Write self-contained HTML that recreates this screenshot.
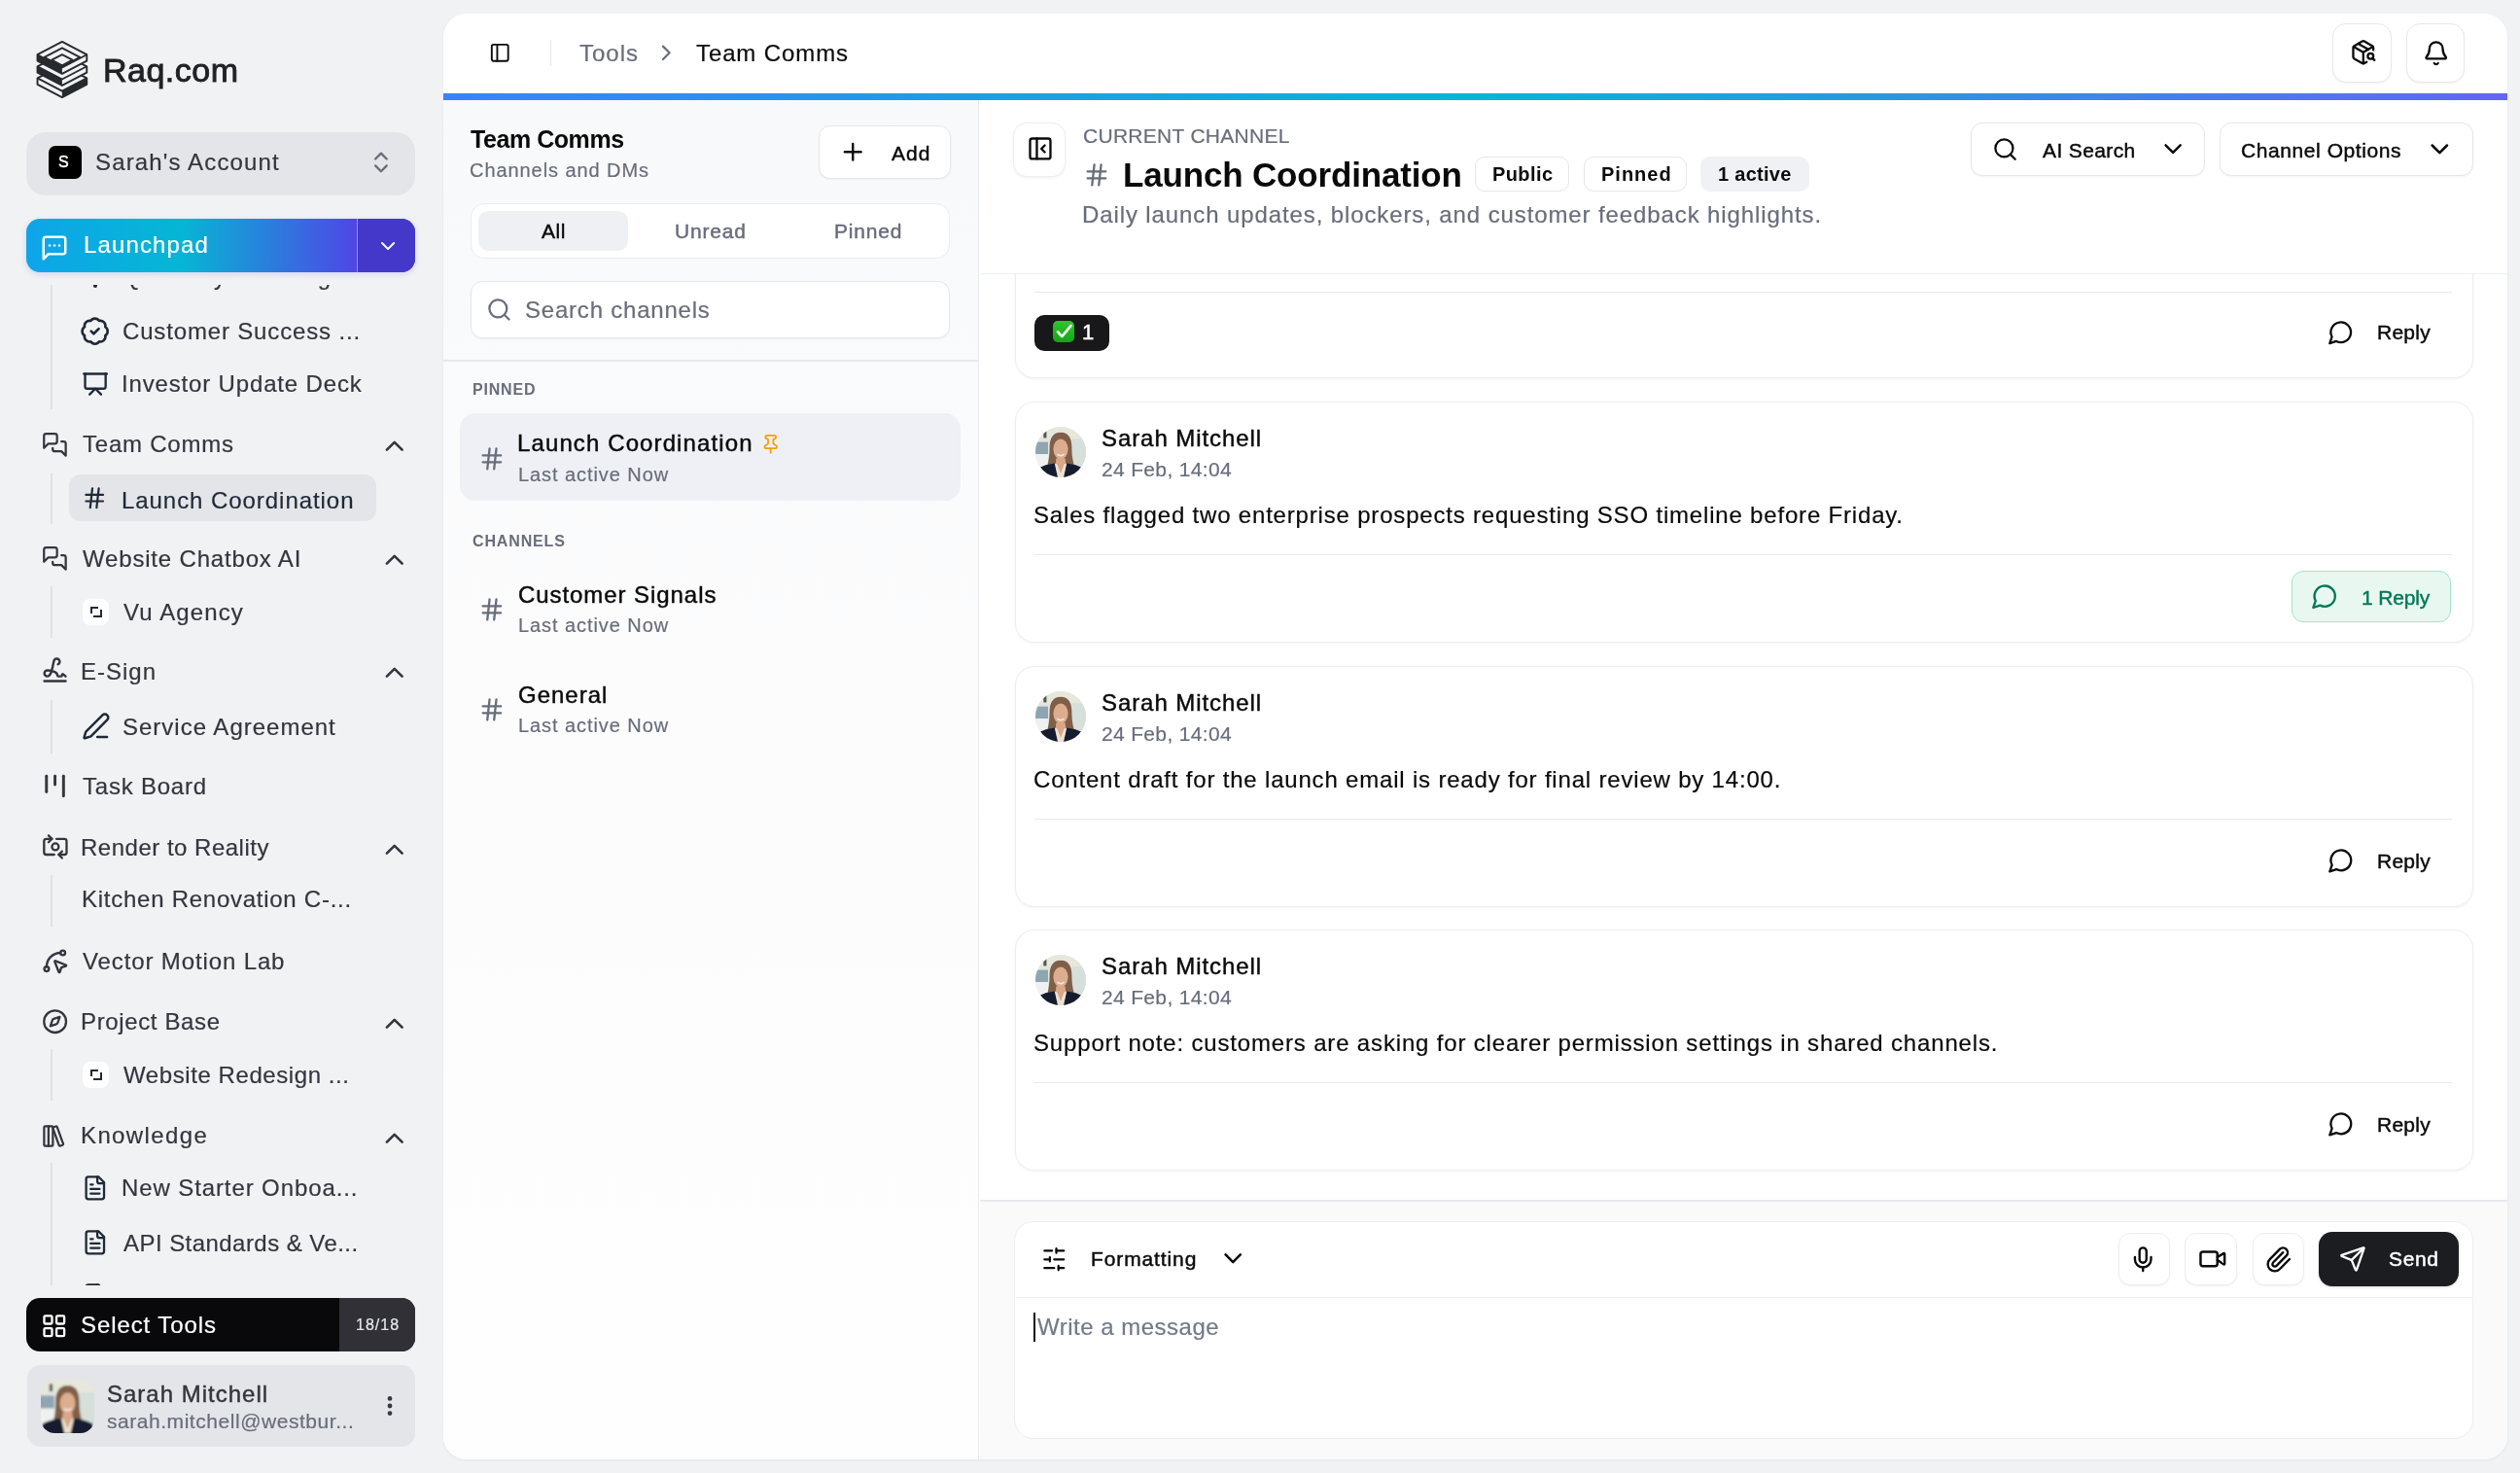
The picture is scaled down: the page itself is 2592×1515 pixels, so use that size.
<!DOCTYPE html>
<html><head><meta charset="utf-8"><title>Team Comms</title>
<style>
html,body{margin:0;padding:0;}
body{width:2592px;height:1515px;position:relative;overflow:hidden;background:#f1f2f4;font-family:"Liberation Sans",sans-serif;}
.t{position:absolute;white-space:nowrap;line-height:1;will-change:transform;}
.b{position:absolute;box-sizing:border-box;}
.i{position:absolute;overflow:visible;}

</style></head><body>
<svg class="i" style="left:31.3px;top:37.3px;width:67.3px;height:67.3px" viewBox="0 0 1473 1473"><path d="M165 950 L720 660 L1275 950 L1275 1090 L720 1380 L165 1090 Z" fill="#f1f2f4"/><path d="M720 1240 L1275 950 L1275 1090 L720 1380 Z" fill="#272a2e"/><path d="M165 950 L720 660 L1275 950 L1275 1090 L720 1380 L165 1090 Z" fill="none" stroke="#272a2e" stroke-width="42" stroke-linejoin="round"/><path d="M165 950 L720 1240 L1275 950" fill="none" stroke="#272a2e" stroke-width="40" stroke-linejoin="round"/><path d="M165 685 L720 395 L1275 685 L1275 825 L720 1115 L165 825 Z" fill="#f1f2f4"/><path d="M165 685 L720 975 L720 1115 L165 825 Z" fill="#272a2e"/><path d="M165 685 L720 395 L1275 685 L1275 825 L720 1115 L165 825 Z" fill="none" stroke="#272a2e" stroke-width="42" stroke-linejoin="round"/><path d="M165 685 L720 975 L1275 685" fill="none" stroke="#272a2e" stroke-width="40" stroke-linejoin="round"/><path d="M165 420 L720 130 L1275 420 L1275 560 L720 850 L165 560 Z" fill="#f1f2f4"/><path d="M165 420 L720 710 L720 850 L165 560 Z" fill="#272a2e"/><path d="M320.40000000000003 480 L720 271.20000000000005 L1119.6 480 L720 688.8 Z" fill="none" stroke="#272a2e" stroke-width="40" stroke-linejoin="round"/><path d="M486.9 540 L720 418.2 L953.1 540 L720 661.8 Z" fill="none" stroke="#272a2e" stroke-width="40" stroke-linejoin="round"/><path d="M165 420 L720 130 L1275 420 L1275 560 L720 850 L165 560 Z" fill="none" stroke="#272a2e" stroke-width="42" stroke-linejoin="round"/><path d="M165 420 L720 710 L1275 420" fill="none" stroke="#272a2e" stroke-width="40" stroke-linejoin="round"/></svg>
<div class="t" id="t1" style="left:106.00px;top:54.71px;font-size:34px;letter-spacing:0.500px;color:#1f2125;font-weight:400;-webkit-text-stroke:0.9px #1f2125;">Raq.com</div>
<div class="b" style="left:27px;top:136px;width:400px;height:65px;background:#e4e5e9;border-radius:20px;"></div>
<div class="b" style="left:50px;top:150px;width:34px;height:34px;background:#000;border-radius:7px;"></div>
<div class="t" id="t2" style="left:60.00px;top:158.95px;font-size:16px;letter-spacing:0.000px;color:#fff;font-weight:400;-webkit-text-stroke:0.45px #fff;">S</div>
<div class="t" id="t3" style="left:98.00px;top:155.48px;font-size:24px;letter-spacing:1.143px;color:#33363e;font-weight:400;-webkit-text-stroke:0.2px #33363e;">Sarah&#x27;s Account</div>
<svg class="i" style="left:378.03px;top:153.22px;width:27.87px;height:27.87px;" viewBox="0 0 24 24" fill="none" stroke="#686d7a" stroke-width="2" stroke-linecap="round" stroke-linejoin="round"><path d="m7 15 5 5 5-5"/><path d="m7 9 5-5 5 5"/></svg>
<div class="b" style="left:27px;top:225px;width:400px;height:55px;border-radius:14px;background:linear-gradient(90deg,#0ea5e9 0%,#06b6d4 40%,#4f46e5 85%,#4f46e5 100%);box-shadow:0 2px 6px rgba(79,70,229,0.18);overflow:hidden"><div style="position:absolute;left:340px;top:0;width:60px;height:55px;background:#4338ca;border-left:1.5px solid rgba(255,255,255,0.45)"></div></div>
<svg class="i" style="left:40.50px;top:239.50px;width:30.00px;height:30.00px;" viewBox="0 0 24 24" fill="none" stroke="#fff" stroke-width="2" stroke-linecap="round" stroke-linejoin="round"><path d="M21 15a2 2 0 0 1-2 2H7l-4 4V5a2 2 0 0 1 2-2h14a2 2 0 0 1 2 2z"/><path d="M8 10h.01"/><path d="M12 10h.01"/><path d="M16 10h.01"/></svg>
<div class="t" id="t4" style="left:85.50px;top:240.48px;font-size:24px;letter-spacing:1.125px;color:#fff;font-weight:400;-webkit-text-stroke:0.2px #fff;">Launchpad</div>
<svg class="i" style="left:386.97px;top:241.45px;width:24.15px;height:24.15px;" viewBox="0 0 24 24" fill="none" stroke="#fff" stroke-width="2" stroke-linecap="round" stroke-linejoin="round"><path d="m6 9 6 6 6-6"/></svg>
<div style="position:absolute;left:0;top:293px;width:440px;height:1029px;overflow:hidden">
<div style="position:absolute;left:0;top:-293px;width:440px;height:1515px">
<div class="b" style="left:52px;top:270px;width:2px;height:151px;background:#dfe1e5;"></div>
<div class="b" style="left:52px;top:487px;width:2px;height:52px;background:#dfe1e5;"></div>
<div class="b" style="left:52px;top:603px;width:2px;height:53px;background:#dfe1e5;"></div>
<div class="b" style="left:52px;top:720px;width:2px;height:55px;background:#dfe1e5;"></div>
<div class="b" style="left:52px;top:900px;width:2px;height:53px;background:#dfe1e5;"></div>
<div class="b" style="left:52px;top:1079px;width:2px;height:53px;background:#dfe1e5;"></div>
<div class="b" style="left:52px;top:1196px;width:2px;height:134px;background:#dfe1e5;"></div>
<div class="t" id="t5" style="left:126.00px;top:273.28px;font-size:24px;letter-spacing:0.900px;color:#33363e;font-weight:400;-webkit-text-stroke:0.2px #33363e;">Quarterly Planning</div>
<div class="b" style="left:96px;top:292px;width:4px;height:3.5px;background:#1f2937;border-radius:2px;"></div>
<svg class="i" style="left:82.24px;top:324.74px;width:31.33px;height:31.33px;" viewBox="0 0 24 24" fill="none" stroke="#1f2937" stroke-width="2" stroke-linecap="round" stroke-linejoin="round"><path d="M3.85 8.62a4 4 0 0 1 4.78-4.77 4 4 0 0 1 6.74 0 4 4 0 0 1 4.78 4.78 4 4 0 0 1 0 6.74 4 4 0 0 1-4.77 4.78 4 4 0 0 1-6.75 0 4 4 0 0 1-4.78-4.77 4 4 0 0 1 0-6.76Z"/><path d="m9 12 2 2 4-4"/></svg>
<div class="t" id="t6" style="left:126.00px;top:329.08px;font-size:24px;letter-spacing:0.842px;color:#33363e;font-weight:400;-webkit-text-stroke:0.2px #33363e;">Customer Success ...</div>
<svg class="i" style="left:84.33px;top:381.25px;width:28.19px;height:28.19px;" viewBox="0 0 24 24" fill="none" stroke="#1f2937" stroke-width="2" stroke-linecap="round" stroke-linejoin="round"><path d="M2 3h20"/><path d="M21 3v11a2 2 0 0 1-2 2H5a2 2 0 0 1-2-2V3"/><path d="m7 21 5-5 5 5"/></svg>
<div class="t" id="t7" style="left:125.00px;top:383.18px;font-size:24px;letter-spacing:0.842px;color:#33363e;font-weight:400;-webkit-text-stroke:0.2px #33363e;">Investor Update Deck</div>
<svg class="i" style="left:42.58px;top:443.58px;width:26.89px;height:26.89px;" viewBox="0 0 24 24" fill="none" stroke="#33363e" stroke-width="2" stroke-linecap="round" stroke-linejoin="round"><path d="M14 9a2 2 0 0 1-2 2H6l-4 4V4a2 2 0 0 1 2-2h8a2 2 0 0 1 2 2z"/><path d="M18 9h2a2 2 0 0 1 2 2v11l-4-4h-6a2 2 0 0 1-2-2v-1"/></svg>
<div class="t" id="t8" style="left:84.60px;top:445.18px;font-size:24px;letter-spacing:0.778px;color:#33363e;font-weight:400;-webkit-text-stroke:0.2px #33363e;">Team Comms</div>
<svg class="i" style="left:389.94px;top:442.50px;width:31.50px;height:31.50px;" viewBox="0 0 24 24" fill="none" stroke="#33363e" stroke-width="2" stroke-linecap="round" stroke-linejoin="round"><path d="m18 15-6-6-6 6"/></svg>
<div class="b" style="left:71px;top:488px;width:316px;height:48px;background:#e4e5e9;border-radius:12px;"></div>
<svg class="i" style="left:84.40px;top:498.80px;width:26.40px;height:26.40px;" viewBox="0 0 24 24" fill="none" stroke="#1f2937" stroke-width="2" stroke-linecap="round" stroke-linejoin="round"><line x1="4" x2="20" y1="9" y2="9"/><line x1="4" x2="20" y1="15" y2="15"/><line x1="10" x2="8" y1="3" y2="21"/><line x1="16" x2="14" y1="3" y2="21"/></svg>
<div class="t" id="t9" style="left:125.00px;top:502.68px;font-size:24px;letter-spacing:0.944px;color:#1f2937;font-weight:400;-webkit-text-stroke:0.2px #1f2937;">Launch Coordination</div>
<svg class="i" style="left:42.58px;top:560.88px;width:26.89px;height:26.89px;" viewBox="0 0 24 24" fill="none" stroke="#33363e" stroke-width="2" stroke-linecap="round" stroke-linejoin="round"><path d="M14 9a2 2 0 0 1-2 2H6l-4 4V4a2 2 0 0 1 2-2h8a2 2 0 0 1 2 2z"/><path d="M18 9h2a2 2 0 0 1 2 2v11l-4-4h-6a2 2 0 0 1-2-2v-1"/></svg>
<div class="t" id="t10" style="left:84.60px;top:562.68px;font-size:24px;letter-spacing:0.824px;color:#33363e;font-weight:400;-webkit-text-stroke:0.2px #33363e;">Website Chatbox AI</div>
<svg class="i" style="left:389.94px;top:560.00px;width:31.50px;height:31.50px;" viewBox="0 0 24 24" fill="none" stroke="#33363e" stroke-width="2" stroke-linecap="round" stroke-linejoin="round"><path d="m18 15-6-6-6 6"/></svg>
<div class="b" style="left:85px;top:616px;width:27.400000000000006px;height:26.600000000000023px;background:#fff;border-radius:8px;"></div>
<div class="b" style="left:93px;top:624px;width:8px;height:7px;border:2.2px solid #1f2937;border-right:none;border-bottom:none"></div><div class="b" style="left:96px;top:627px;width:9px;height:8px;border:2.2px solid #1f2937;border-left:none;border-top:none"></div>
<div class="t" id="t11" style="left:127.00px;top:617.68px;font-size:24px;letter-spacing:1.125px;color:#33363e;font-weight:400;-webkit-text-stroke:0.2px #33363e;">Vu Agency</div>
<svg class="i" style="left:41.57px;top:674.96px;width:29.17px;height:29.17px;" viewBox="0 0 24 24" fill="none" stroke="#33363e" stroke-width="2" stroke-linecap="round" stroke-linejoin="round"><path d="m21 17-2.156-1.868A.5.5 0 0 0 18 15.5v.5a1 1 0 0 1-1 1h-2a1 1 0 0 1-1-1c0-2.545-3.991-3.97-8.5-4a1 1 0 0 0 0 5c4.153 0 4.745-11.295 5.708-13.5a2.5 2.5 0 1 1 3.31 3.284"/><path d="M3 21h18"/></svg>
<div class="t" id="t12" style="left:82.60px;top:678.68px;font-size:24px;letter-spacing:1.000px;color:#33363e;font-weight:400;-webkit-text-stroke:0.2px #33363e;">E-Sign</div>
<svg class="i" style="left:389.94px;top:676.00px;width:31.50px;height:31.50px;" viewBox="0 0 24 24" fill="none" stroke="#33363e" stroke-width="2" stroke-linecap="round" stroke-linejoin="round"><path d="m18 15-6-6-6 6"/></svg>
<svg class="i" style="left:84.26px;top:732.14px;width:29.79px;height:29.79px;" viewBox="0 0 24 24" fill="none" stroke="#1f2937" stroke-width="2" stroke-linecap="round" stroke-linejoin="round"><path d="M13 21h8"/><path d="M21.174 6.812a1 1 0 0 0-3.986-3.987L3.842 16.174a2 2 0 0 0-.5.83l-1.321 4.352a.5.5 0 0 0 .623.622l4.353-1.32a2 2 0 0 0 .83-.497z"/></svg>
<div class="t" id="t13" style="left:126.00px;top:736.18px;font-size:24px;letter-spacing:1.000px;color:#33363e;font-weight:400;-webkit-text-stroke:0.2px #33363e;">Service Agreement</div>
<svg class="i" style="left:38.68px;top:791.14px;width:35.14px;height:35.14px;" viewBox="0 0 24 24" fill="none" stroke="#33363e" stroke-width="2" stroke-linecap="round" stroke-linejoin="round"><path d="M6 5v11"/><path d="M12 5v6"/><path d="M18 5v14"/></svg>
<div class="t" id="t14" style="left:84.60px;top:796.68px;font-size:24px;letter-spacing:0.778px;color:#33363e;font-weight:400;-webkit-text-stroke:0.2px #33363e;">Task Board</div>
<svg class="i" style="left:42.54px;top:856.84px;width:27.82px;height:27.82px;" viewBox="0 0 24 24" fill="none" stroke="#33363e" stroke-width="2" stroke-linecap="round" stroke-linejoin="round"><path d="M11 19H4a2 2 0 0 1-2-2V7a2 2 0 0 1 2-2h5"/><path d="M13 5h7a2 2 0 0 1 2 2v10a2 2 0 0 1-2 2h-5"/><circle cx="12" cy="12" r="3"/><path d="m18 22-3-3 3-3"/><path d="m6 2 3 3-3 3"/></svg>
<div class="t" id="t15" style="left:82.60px;top:859.68px;font-size:24px;letter-spacing:0.500px;color:#33363e;font-weight:400;-webkit-text-stroke:0.2px #33363e;">Render to Reality</div>
<svg class="i" style="left:389.94px;top:857.50px;width:31.50px;height:31.50px;" viewBox="0 0 24 24" fill="none" stroke="#33363e" stroke-width="2" stroke-linecap="round" stroke-linejoin="round"><path d="m18 15-6-6-6 6"/></svg>
<div class="t" id="t16" style="left:83.50px;top:913.28px;font-size:24px;letter-spacing:0.739px;color:#33363e;font-weight:400;-webkit-text-stroke:0.2px #33363e;">Kitchen Renovation C-...</div>
<svg class="i" style="left:41.62px;top:973.62px;width:28.57px;height:28.57px;" viewBox="0 0 24 24" fill="none" stroke="#33363e" stroke-width="2" stroke-linecap="round" stroke-linejoin="round"><path d="M12.034 12.681a.498.498 0 0 1 .647-.647l9 3.5a.5.5 0 0 1-.033.943l-3.444 1.068a1 1 0 0 0-.66.66l-1.067 3.443a.5.5 0 0 1-.943.033z"/><path d="M5 17A12 12 0 0 1 17 5"/><circle cx="19" cy="5" r="2"/><circle cx="5" cy="19" r="2"/></svg>
<div class="t" id="t17" style="left:84.60px;top:976.68px;font-size:24px;letter-spacing:0.875px;color:#33363e;font-weight:400;-webkit-text-stroke:0.2px #33363e;">Vector Motion Lab</div>
<svg class="i" style="left:42.56px;top:1036.86px;width:27.27px;height:27.27px;" viewBox="0 0 24 24" fill="none" stroke="#33363e" stroke-width="2" stroke-linecap="round" stroke-linejoin="round"><path d="m16.24 7.76-1.804 5.411a2 2 0 0 1-1.265 1.265L7.76 16.24l1.804-5.411a2 2 0 0 1 1.265-1.265z"/><circle cx="12" cy="12" r="10"/></svg>
<div class="t" id="t18" style="left:82.60px;top:1038.68px;font-size:24px;letter-spacing:0.636px;color:#33363e;font-weight:400;-webkit-text-stroke:0.2px #33363e;">Project Base</div>
<svg class="i" style="left:389.94px;top:1036.50px;width:31.50px;height:31.50px;" viewBox="0 0 24 24" fill="none" stroke="#33363e" stroke-width="2" stroke-linecap="round" stroke-linejoin="round"><path d="m18 15-6-6-6 6"/></svg>
<div class="b" style="left:85px;top:1092px;width:27.400000000000006px;height:26.59999999999991px;background:#fff;border-radius:8px;"></div>
<div class="b" style="left:93px;top:1100px;width:8px;height:7px;border:2.2px solid #1f2937;border-right:none;border-bottom:none"></div><div class="b" style="left:96px;top:1103px;width:9px;height:8px;border:2.2px solid #1f2937;border-left:none;border-top:none"></div>
<div class="t" id="t19" style="left:127.00px;top:1093.68px;font-size:24px;letter-spacing:0.579px;color:#33363e;font-weight:400;-webkit-text-stroke:0.2px #33363e;">Website Redesign ...</div>
<svg class="i" style="left:42.25px;top:1154.75px;width:27.00px;height:27.00px;" viewBox="0 0 24 24" fill="none" stroke="#33363e" stroke-width="2" stroke-linecap="round" stroke-linejoin="round"><rect width="8" height="18" x="3" y="3" rx="1"/><path d="M7 3v18"/><path d="M20.4 18.9c.2.5-.1 1.1-.6 1.3l-1.9.7c-.5.2-1.1-.1-1.3-.6L11.1 5.1c-.2-.5.1-1.1.6-1.3l1.9-.7c.5-.2 1.1.1 1.3.6Z"/></svg>
<div class="t" id="t20" style="left:82.60px;top:1155.98px;font-size:24px;letter-spacing:1.375px;color:#33363e;font-weight:400;-webkit-text-stroke:0.2px #33363e;">Knowledge</div>
<svg class="i" style="left:389.94px;top:1154.50px;width:31.50px;height:31.50px;" viewBox="0 0 24 24" fill="none" stroke="#33363e" stroke-width="2" stroke-linecap="round" stroke-linejoin="round"><path d="m18 15-6-6-6 6"/></svg>
<svg class="i" style="left:84.05px;top:1207.85px;width:27.64px;height:27.64px;" viewBox="0 0 24 24" fill="none" stroke="#1f2937" stroke-width="2" stroke-linecap="round" stroke-linejoin="round"><path d="M15 2H6a2 2 0 0 0-2 2v16a2 2 0 0 0 2 2h12a2 2 0 0 0 2-2V7Z"/><path d="M14 2v4a2 2 0 0 0 2 2h4"/><path d="M10 9H8"/><path d="M16 13H8"/><path d="M16 17H8"/></svg>
<div class="t" id="t21" style="left:125.00px;top:1210.18px;font-size:24px;letter-spacing:0.895px;color:#33363e;font-weight:400;-webkit-text-stroke:0.2px #33363e;">New Starter Onboa...</div>
<svg class="i" style="left:84.05px;top:1263.85px;width:27.64px;height:27.64px;" viewBox="0 0 24 24" fill="none" stroke="#1f2937" stroke-width="2" stroke-linecap="round" stroke-linejoin="round"><path d="M15 2H6a2 2 0 0 0-2 2v16a2 2 0 0 0 2 2h12a2 2 0 0 0 2-2V7Z"/><path d="M14 2v4a2 2 0 0 0 2 2h4"/><path d="M10 9H8"/><path d="M16 13H8"/><path d="M16 17H8"/></svg>
<div class="t" id="t22" style="left:127.00px;top:1266.68px;font-size:24px;letter-spacing:0.450px;color:#33363e;font-weight:400;-webkit-text-stroke:0.2px #33363e;">API Standards &amp; Ve...</div>
<svg class="i" style="left:84.05px;top:1318.85px;width:27.64px;height:27.64px;" viewBox="0 0 24 24" fill="none" stroke="#1f2937" stroke-width="2" stroke-linecap="round" stroke-linejoin="round"><path d="M15 2H6a2 2 0 0 0-2 2v16a2 2 0 0 0 2 2h12a2 2 0 0 0 2-2V7Z"/><path d="M14 2v4a2 2 0 0 0 2 2h4"/><path d="M10 9H8"/><path d="M16 13H8"/><path d="M16 17H8"/></svg>
</div></div>
<div class="b" style="left:27px;top:1335px;width:400px;height:55px;border-radius:14px;background:#09090b;overflow:hidden"><div style="position:absolute;left:322px;top:0;width:78px;height:55px;background:#303036"></div></div>
<svg class="i" style="left:41.70px;top:1349.70px;width:27.60px;height:27.60px;" viewBox="0 0 24 24" fill="none" stroke="#fff" stroke-width="2" stroke-linecap="round" stroke-linejoin="round"><rect width="7" height="7" x="3" y="3" rx="1"/><rect width="7" height="7" x="14" y="3" rx="1"/><rect width="7" height="7" x="14" y="14" rx="1"/><rect width="7" height="7" x="3" y="14" rx="1"/></svg>
<div class="t" id="t23" style="left:83.00px;top:1350.68px;font-size:24px;letter-spacing:0.909px;color:#fff;font-weight:400;-webkit-text-stroke:0.2px #fff;">Select Tools</div>
<div class="t" id="t24" style="left:366.00px;top:1355.15px;font-size:16px;letter-spacing:1.000px;color:#e5e7eb;font-weight:400;-webkit-text-stroke:0.2px #e5e7eb;">18/18</div>
<div class="b" style="left:28px;top:1404px;width:399px;height:84px;background:#e4e5e9;border-radius:14px;"></div>
<svg class="i" style="left:42px;top:1419px;width:55px;height:55px" viewBox="0 0 100 100"><defs><clipPath id="c42_1419"><rect x="0" y="0" width="100" height="100" rx="26"/></clipPath><filter id="f42_1419" x="-10%" y="-10%" width="120%" height="120%"><feGaussianBlur stdDeviation="1.5"/></filter></defs>
<g clip-path="url(#c42_1419)"><rect width="100" height="100" fill="#e2e5de"/>
<g filter="url(#f42_1419)">
<rect x="-5" y="-5" width="110" height="30" fill="#e7e7dc"/>
<rect x="-5" y="30" width="30" height="24" fill="#8fa5b2"/><rect x="-5" y="54" width="30" height="36" fill="#eef1ef"/>
<rect x="72" y="24" width="35" height="66" fill="#d6dfda"/><rect x="16" y="8" width="6" height="14" fill="#55594f"/>
<path d="M50 11 C32 11 28 26 28 42 C28 60 25 72 22 84 L79 84 C75 72 72 60 72 42 C72 26 68 11 50 11Z" fill="#7f5f47"/>
<ellipse cx="50" cy="44" rx="14.5" ry="20" fill="#dcae90"/>
<path d="M43 54 Q50 60 57 54" stroke="#f4e4dc" stroke-width="3.5" fill="none"/>
<path d="M41 62 L59 62 L62 100 L38 100Z" fill="#d9a688"/>
<path d="M-5 105 L4 82 Q20 74 38 72 L44 100 L56 100 L62 72 Q80 74 96 82 L105 105Z" fill="#171c2f"/>
<path d="M38 72 L45 100 L55 100 L62 72 L57 74 L50 92 L43 74Z" fill="#ece2d4"/>
</g></g></svg>
<div class="t" id="t25" style="left:110.00px;top:1421.68px;font-size:24px;letter-spacing:1.000px;color:#33363e;font-weight:400;-webkit-text-stroke:0.45px #33363e;">Sarah Mitchell</div>
<div class="t" id="t26" style="left:110.00px;top:1450.92px;font-size:21px;letter-spacing:0.542px;color:#686d7a;font-weight:400;-webkit-text-stroke:0.2px #686d7a;">sarah.mitchell@westbur...</div>
<svg class="i" style="left:387.67px;top:1432.75px;width:26.00px;height:26.00px;" viewBox="0 0 24 24" fill="none" stroke="#33363e" stroke-width="2.4" stroke-linecap="round" stroke-linejoin="round"><circle cx="12" cy="12" r="1"/><circle cx="12" cy="5" r="1"/><circle cx="12" cy="19" r="1"/></svg>
<div class="b" style="left:456px;top:14px;width:2123px;height:1487px;background:#fff;border-radius:24px;box-shadow:0 1px 3px rgba(0,0,0,0.06);overflow:hidden;"></div>
<svg class="i" style="left:502.62px;top:43.12px;width:22.50px;height:22.50px;" viewBox="0 0 24 24" fill="none" stroke="#0a0a0a" stroke-width="2" stroke-linecap="round" stroke-linejoin="round"><rect width="18" height="18" x="3" y="3" rx="2"/><path d="M9 3v18"/></svg>
<div class="b" style="left:566px;top:41px;width:1px;height:27px;background:#e5e7eb;"></div>
<div class="t" id="t27" style="left:596.00px;top:42.68px;font-size:24px;letter-spacing:1.000px;color:#686d7a;font-weight:400;-webkit-text-stroke:0.2px #686d7a;">Tools</div>
<svg class="i" style="left:671.73px;top:41.26px;width:26.61px;height:26.61px;" viewBox="0 0 24 24" fill="none" stroke="#686d7a" stroke-width="2" stroke-linecap="round" stroke-linejoin="round"><path d="m9 18 6-6-6-6"/></svg>
<div class="t" id="t28" style="left:716.00px;top:42.68px;font-size:24px;letter-spacing:0.889px;color:#0a0a0a;font-weight:400;-webkit-text-stroke:0.2px #0a0a0a;">Team Comms</div>
<div class="b" style="left:2399px;top:24px;width:61px;height:61px;background:#fff;border:1.5px solid #e8e9ec;border-radius:14px;box-shadow:0 1px 2px rgba(0,0,0,0.05);"></div>
<svg class="i" style="left:2416.70px;top:40.35px;width:27.62px;height:27.62px;" viewBox="0 0 24 24" fill="none" stroke="#0a0a0a" stroke-width="2" stroke-linecap="round" stroke-linejoin="round"><path d="M21 10V8a2 2 0 0 0-1-1.73l-7-4a2 2 0 0 0-2 0l-7 4A2 2 0 0 0 3 8v8a2 2 0 0 0 1 1.73l7 4a2 2 0 0 0 2 0l2-1.14"/><path d="m7.5 4.27 9 5.15"/><polyline points="3.29 7 12 12 20.71 7"/><line x1="12" x2="12" y1="22" y2="12"/><circle cx="18.5" cy="15.5" r="2.5"/><path d="M20.27 17.27 22 19"/></svg>
<div class="b" style="left:2475px;top:24px;width:60px;height:61px;background:#fff;border:1.5px solid #e8e9ec;border-radius:14px;box-shadow:0 1px 2px rgba(0,0,0,0.05);"></div>
<svg class="i" style="left:2491.71px;top:40.86px;width:27.44px;height:27.44px;" viewBox="0 0 24 24" fill="none" stroke="#0a0a0a" stroke-width="2" stroke-linecap="round" stroke-linejoin="round"><path d="M10.268 21a2 2 0 0 0 3.464 0"/><path d="M3.262 15.326A1 1 0 0 0 4 17h16a1 1 0 0 0 .74-1.673C19.41 13.956 18 12.499 18 8A6 6 0 0 0 6 8c0 4.499-1.411 5.956-2.738 7.326"/></svg>
<div class="b" style="left:456px;top:96px;width:2123px;height:7px;background:linear-gradient(90deg,#3b82f6 0%,#06b6d4 50%,#6366f1 100%);"></div>
<div class="b" style="left:456px;top:103px;width:551px;height:1398px;background:linear-gradient(180deg,#f8f9fa 0%,#fcfcfd 45%,#fefefe 100%);border-right:1.5px solid #ebecef;border-bottom-left-radius:24px;"></div>
<div class="t" id="t29" style="left:484.00px;top:130.83px;font-size:25px;letter-spacing:-0.444px;color:#0a0a0a;font-weight:700;">Team Comms</div>
<div class="t" id="t30" style="left:483.00px;top:164.77px;font-size:20px;letter-spacing:0.933px;color:#686d7a;font-weight:400;-webkit-text-stroke:0.2px #686d7a;">Channels and DMs</div>
<div class="b" style="left:842px;top:129px;width:135.5px;height:54.5px;background:#fff;border:1.5px solid #e5e7eb;border-radius:12px;box-shadow:0 1px 2px rgba(0,0,0,0.05);"></div>
<svg class="i" style="left:863.25px;top:142.25px;width:28.50px;height:28.50px;" viewBox="0 0 24 24" fill="none" stroke="#0a0a0a" stroke-width="2" stroke-linecap="round" stroke-linejoin="round"><path d="M5 12h14"/><path d="M12 5v14"/></svg>
<div class="t" id="t31" style="left:917.00px;top:146.52px;font-size:21px;letter-spacing:1.000px;color:#0a0a0a;font-weight:400;-webkit-text-stroke:0.45px #0a0a0a;">Add</div>
<div class="b" style="left:484px;top:209px;width:493px;height:57px;background:#fff;border:1.5px solid #ebecef;border-radius:14px;"></div>
<div class="b" style="left:492px;top:217px;width:154px;height:41px;background:#eef0f4;border-radius:10px;"></div>
<div class="t" id="t32" style="left:557.00px;top:226.92px;font-size:21px;letter-spacing:0.500px;color:#0a0a0a;font-weight:400;-webkit-text-stroke:0.45px #0a0a0a;">All</div>
<div class="t" id="t33" style="left:694.00px;top:226.92px;font-size:21px;letter-spacing:0.800px;color:#686d7a;font-weight:400;-webkit-text-stroke:0.45px #686d7a;">Unread</div>
<div class="t" id="t34" style="left:858.00px;top:226.92px;font-size:21px;letter-spacing:0.800px;color:#686d7a;font-weight:400;-webkit-text-stroke:0.45px #686d7a;">Pinned</div>
<div class="b" style="left:484px;top:289px;width:493px;height:59px;background:#fff;border:1.5px solid #e5e7eb;border-radius:12px;box-shadow:0 1px 2px rgba(0,0,0,0.04);"></div>
<svg class="i" style="left:499.75px;top:305.25px;width:26.94px;height:26.94px;" viewBox="0 0 24 24" fill="none" stroke="#686d7a" stroke-width="2" stroke-linecap="round" stroke-linejoin="round"><circle cx="11" cy="11" r="8"/><path d="m21 21-4.3-4.3"/></svg>
<div class="t" id="t35" style="left:540.00px;top:306.68px;font-size:24px;letter-spacing:0.786px;color:#686d7a;font-weight:400;-webkit-text-stroke:0.2px #686d7a;">Search channels</div>
<div class="b" style="left:456px;top:370px;width:551px;height:1.5px;background:#e8e9ec;"></div>
<div class="t" id="t36" style="left:486.00px;top:393.45px;font-size:16px;letter-spacing:0.800px;color:#686d7a;font-weight:700;">PINNED</div>
<div class="b" style="left:473px;top:425px;width:515px;height:90px;background:#eef0f5;border-radius:16px;"></div>
<svg class="i" style="left:491.52px;top:457.68px;width:27.80px;height:27.80px;" viewBox="0 0 24 24" fill="none" stroke="#686d7a" stroke-width="2" stroke-linecap="round" stroke-linejoin="round"><line x1="4" x2="20" y1="9" y2="9"/><line x1="4" x2="20" y1="15" y2="15"/><line x1="10" x2="8" y1="3" y2="21"/><line x1="16" x2="14" y1="3" y2="21"/></svg>
<div class="t" id="t37" style="left:531.50px;top:444.28px;font-size:24px;letter-spacing:1.111px;color:#0a0a0a;font-weight:400;-webkit-text-stroke:0.45px #0a0a0a;">Launch Coordination</div>
<svg class="i" style="left:782.42px;top:445.71px;width:21.45px;height:21.45px;" viewBox="0 0 24 24" fill="none" stroke="#f59e0b" stroke-width="2" stroke-linecap="round" stroke-linejoin="round"><path d="M12 17v5"/><path d="M9 10.76a2 2 0 0 1-1.11 1.79l-1.78.9A2 2 0 0 0 5 15.24V16a1 1 0 0 0 1 1h12a1 1 0 0 0 1-1v-.76a2 2 0 0 0-1.11-1.79l-1.78-.9A2 2 0 0 1 15 10.76V7a1 1 0 0 1 1-1 2 2 0 0 0 0-4H8a2 2 0 0 0 0 4 1 1 0 0 1 1 1z"/></svg>
<div class="t" id="t38" style="left:532.50px;top:477.67px;font-size:20px;letter-spacing:0.929px;color:#686d7a;font-weight:400;-webkit-text-stroke:0.2px #686d7a;">Last active Now</div>
<div class="t" id="t39" style="left:486.00px;top:549.45px;font-size:16px;letter-spacing:0.857px;color:#686d7a;font-weight:700;">CHANNELS</div>
<svg class="i" style="left:491.52px;top:612.68px;width:27.80px;height:27.80px;" viewBox="0 0 24 24" fill="none" stroke="#686d7a" stroke-width="2" stroke-linecap="round" stroke-linejoin="round"><line x1="4" x2="20" y1="9" y2="9"/><line x1="4" x2="20" y1="15" y2="15"/><line x1="10" x2="8" y1="3" y2="21"/><line x1="16" x2="14" y1="3" y2="21"/></svg>
<div class="t" id="t40" style="left:532.50px;top:599.68px;font-size:24px;letter-spacing:0.933px;color:#0a0a0a;font-weight:400;-webkit-text-stroke:0.45px #0a0a0a;">Customer Signals</div>
<div class="t" id="t41" style="left:532.50px;top:633.07px;font-size:20px;letter-spacing:0.929px;color:#686d7a;font-weight:400;-webkit-text-stroke:0.2px #686d7a;">Last active Now</div>
<svg class="i" style="left:491.52px;top:715.68px;width:27.80px;height:27.80px;" viewBox="0 0 24 24" fill="none" stroke="#686d7a" stroke-width="2" stroke-linecap="round" stroke-linejoin="round"><line x1="4" x2="20" y1="9" y2="9"/><line x1="4" x2="20" y1="15" y2="15"/><line x1="10" x2="8" y1="3" y2="21"/><line x1="16" x2="14" y1="3" y2="21"/></svg>
<div class="t" id="t42" style="left:532.50px;top:702.68px;font-size:24px;letter-spacing:1.000px;color:#0a0a0a;font-weight:400;-webkit-text-stroke:0.45px #0a0a0a;">General</div>
<div class="t" id="t43" style="left:532.50px;top:736.07px;font-size:20px;letter-spacing:0.929px;color:#686d7a;font-weight:400;-webkit-text-stroke:0.2px #686d7a;">Last active Now</div>
<div class="b" style="left:1008px;top:280.5px;width:1571px;height:1.5px;background:#f0f1f3;"></div>
<div class="b" style="left:1042px;top:126px;width:54px;height:56px;background:#fff;border:1.5px solid #eceef1;border-radius:14px;box-shadow:0 1px 3px rgba(0,0,0,0.06);"></div>
<svg class="i" style="left:1055.67px;top:139.47px;width:27.96px;height:27.96px;" viewBox="0 0 24 24" fill="none" stroke="#0a0a0a" stroke-width="2" stroke-linecap="round" stroke-linejoin="round"><rect width="18" height="18" x="3" y="3" rx="2"/><path d="M9 3v18"/><path d="m16 15-3-3 3-3"/></svg>
<div class="t" id="t44" style="left:1114.00px;top:129.22px;font-size:21px;letter-spacing:0.286px;color:#686d7a;font-weight:400;-webkit-text-stroke:0.2px #686d7a;">CURRENT CHANNEL</div>
<svg class="i" style="left:1113.52px;top:165.68px;width:27.87px;height:27.87px;" viewBox="0 0 24 24" fill="none" stroke="#686d7a" stroke-width="2" stroke-linecap="round" stroke-linejoin="round"><line x1="4" x2="20" y1="9" y2="9"/><line x1="4" x2="20" y1="15" y2="15"/><line x1="10" x2="8" y1="3" y2="21"/><line x1="16" x2="14" y1="3" y2="21"/></svg>
<div class="t" id="t45" style="left:1155.00px;top:162.17px;font-size:35px;letter-spacing:-0.167px;color:#0a0a0a;font-weight:700;">Launch Coordination</div>
<div class="b" style="left:1517px;top:161px;width:97px;height:36px;background:#fff;border:1.5px solid #e5e7eb;border-radius:10px;"></div>
<div class="t" id="t46" style="left:1535.00px;top:168.77px;font-size:20px;letter-spacing:0.400px;color:#0a0a0a;font-weight:700;">Public</div>
<div class="b" style="left:1629px;top:161px;width:106px;height:36px;background:#fff;border:1.5px solid #e5e7eb;border-radius:10px;"></div>
<div class="t" id="t47" style="left:1647.00px;top:168.77px;font-size:20px;letter-spacing:1.000px;color:#0a0a0a;font-weight:700;">Pinned</div>
<div class="b" style="left:1749px;top:161px;width:112px;height:36px;background:#eff1f5;border-radius:10px;"></div>
<div class="t" id="t48" style="left:1767.00px;top:168.77px;font-size:20px;letter-spacing:0.286px;color:#0a0a0a;font-weight:700;">1 active</div>
<div class="t" id="t49" style="left:1113.00px;top:209.28px;font-size:24px;letter-spacing:0.891px;color:#686d7a;font-weight:400;-webkit-text-stroke:0.2px #686d7a;">Daily launch updates, blockers, and customer feedback highlights.</div>
<div class="b" style="left:2027px;top:126px;width:241px;height:55px;background:#fff;border:1.5px solid #e5e7eb;border-radius:12px;box-shadow:0 1px 2px rgba(0,0,0,0.05);"></div>
<svg class="i" style="left:2048.74px;top:140.34px;width:27.12px;height:27.12px;" viewBox="0 0 24 24" fill="none" stroke="#0a0a0a" stroke-width="2" stroke-linecap="round" stroke-linejoin="round"><circle cx="11" cy="11" r="8"/><path d="m21 21-4.3-4.3"/></svg>
<div class="t" id="t50" style="left:2101.00px;top:143.72px;font-size:21px;letter-spacing:0.375px;color:#0a0a0a;font-weight:400;-webkit-text-stroke:0.45px #0a0a0a;">AI Search</div>
<svg class="i" style="left:2219.71px;top:137.93px;width:30.21px;height:30.21px;" viewBox="0 0 24 24" fill="none" stroke="#0a0a0a" stroke-width="2" stroke-linecap="round" stroke-linejoin="round"><path d="m6 9 6 6 6-6"/></svg>
<div class="b" style="left:2283px;top:126px;width:261px;height:55px;background:#fff;border:1.5px solid #e5e7eb;border-radius:12px;box-shadow:0 1px 2px rgba(0,0,0,0.05);"></div>
<div class="t" id="t51" style="left:2305.00px;top:143.72px;font-size:21px;letter-spacing:0.571px;color:#0a0a0a;font-weight:400;-webkit-text-stroke:0.45px #0a0a0a;">Channel Options</div>
<svg class="i" style="left:2493.62px;top:137.79px;width:30.64px;height:30.64px;" viewBox="0 0 24 24" fill="none" stroke="#0a0a0a" stroke-width="2" stroke-linecap="round" stroke-linejoin="round"><path d="m6 9 6 6 6-6"/></svg>
<div style="position:absolute;left:1008px;top:282px;width:1571px;height:952px;overflow:hidden">
<div style="position:absolute;left:-1008px;top:-282px;width:2592px;height:1515px">
<div class="b" style="left:1044px;top:140px;width:1500px;height:249px;background:#fff;border:1.5px solid #eceef1;border-radius:20px;box-shadow:0 1px 3px rgba(0,0,0,0.05);"></div>
<div class="b" style="left:1064px;top:299.5px;width:1458px;height:1.5px;background:#e8eaed;"></div>
<div class="b" style="left:1064px;top:324px;width:77px;height:37px;background:#18181b;border-radius:10px;"></div>
<div class="b" style="left:1083.3px;top:330px;width:21.5px;height:22px;background:linear-gradient(180deg,#2fc52f,#13a813);border-radius:5px"></div>
<svg class="i" style="left:1083.09px;top:329.11px;width:23.48px;height:23.48px;" viewBox="0 0 24 24" fill="none" stroke="#fff" stroke-width="2.6" stroke-linecap="round" stroke-linejoin="round"><path d="M5 12.5l4.5 5L19 6"/></svg>
<div class="t" id="t52" style="left:1113.00px;top:330.57px;font-size:22px;letter-spacing:0.000px;color:#fff;font-weight:400;-webkit-text-stroke:0.45px #fff;">1</div>
<svg class="i" style="left:2393.85px;top:327.85px;width:27.49px;height:27.49px;" viewBox="0 0 24 24" fill="none" stroke="#0a0a0a" stroke-width="2" stroke-linecap="round" stroke-linejoin="round"><path d="M7.9 20A9 9 0 1 0 4 16.1L2 22Z"/></svg>
<div class="t" id="t53" style="left:2445.00px;top:331.12px;font-size:21px;letter-spacing:0.250px;color:#0a0a0a;font-weight:400;-webkit-text-stroke:0.45px #0a0a0a;">Reply</div>
<div class="b" style="left:1044px;top:412.5px;width:1500px;height:248.5px;background:#fff;border:1.5px solid #eceef1;border-radius:20px;box-shadow:0 1px 3px rgba(0,0,0,0.05);"></div>
<svg class="i" style="left:1064.5px;top:439.0px;width:52px;height:52px" viewBox="0 0 100 100"><defs><clipPath id="c1064_439"><rect x="0" y="0" width="100" height="100" rx="50"/></clipPath><filter id="f1064_439" x="-10%" y="-10%" width="120%" height="120%"><feGaussianBlur stdDeviation="1.5"/></filter></defs>
<g clip-path="url(#c1064_439)"><rect width="100" height="100" fill="#e2e5de"/>
<g filter="url(#f1064_439)">
<rect x="-5" y="-5" width="110" height="30" fill="#e7e7dc"/>
<rect x="-5" y="30" width="30" height="24" fill="#8fa5b2"/><rect x="-5" y="54" width="30" height="36" fill="#eef1ef"/>
<rect x="72" y="24" width="35" height="66" fill="#d6dfda"/><rect x="16" y="8" width="6" height="14" fill="#55594f"/>
<path d="M50 11 C32 11 28 26 28 42 C28 60 25 72 22 84 L79 84 C75 72 72 60 72 42 C72 26 68 11 50 11Z" fill="#7f5f47"/>
<ellipse cx="50" cy="44" rx="14.5" ry="20" fill="#dcae90"/>
<path d="M43 54 Q50 60 57 54" stroke="#f4e4dc" stroke-width="3.5" fill="none"/>
<path d="M41 62 L59 62 L62 100 L38 100Z" fill="#d9a688"/>
<path d="M-5 105 L4 82 Q20 74 38 72 L44 100 L56 100 L62 72 Q80 74 96 82 L105 105Z" fill="#171c2f"/>
<path d="M38 72 L45 100 L55 100 L62 72 L57 74 L50 92 L43 74Z" fill="#ece2d4"/>
</g></g></svg>
<div class="t" id="t54" style="left:1133.00px;top:439.38px;font-size:24px;letter-spacing:0.923px;color:#0a0a0a;font-weight:400;-webkit-text-stroke:0.45px #0a0a0a;">Sarah Mitchell</div>
<div class="t" id="t55" style="left:1133.00px;top:472.22px;font-size:21px;letter-spacing:0.333px;color:#686d7a;font-weight:400;-webkit-text-stroke:0.2px #686d7a;">24 Feb, 14:04</div>
<div class="t" id="t56" style="left:1063.00px;top:518.38px;font-size:24px;letter-spacing:0.816px;color:#0a0a0a;font-weight:400;-webkit-text-stroke:0.2px #0a0a0a;">Sales flagged two enterprise prospects requesting SSO timeline before Friday.</div>
<div class="b" style="left:1064px;top:569.5px;width:1458px;height:1.5px;background:#e8eaed;"></div>
<div class="b" style="left:2357px;top:586.5px;width:164px;height:53.5px;background:#e8f8f1;border:1.5px solid #a5e3c6;border-radius:12px;"></div>
<svg class="i" style="left:2376.82px;top:599.32px;width:28.36px;height:28.36px;" viewBox="0 0 24 24" fill="none" stroke="#047857" stroke-width="2" stroke-linecap="round" stroke-linejoin="round"><path d="M7.9 20A9 9 0 1 0 4 16.1L2 22Z"/></svg>
<div class="t" id="t57" style="left:2429.00px;top:604.22px;font-size:21px;letter-spacing:-0.167px;color:#047857;font-weight:400;-webkit-text-stroke:0.45px #047857;">1 Reply</div>
<div class="b" style="left:1044px;top:684.5px;width:1500px;height:248.5px;background:#fff;border:1.5px solid #eceef1;border-radius:20px;box-shadow:0 1px 3px rgba(0,0,0,0.05);"></div>
<svg class="i" style="left:1064.5px;top:711.0px;width:52px;height:52px" viewBox="0 0 100 100"><defs><clipPath id="c1064_711"><rect x="0" y="0" width="100" height="100" rx="50"/></clipPath><filter id="f1064_711" x="-10%" y="-10%" width="120%" height="120%"><feGaussianBlur stdDeviation="1.5"/></filter></defs>
<g clip-path="url(#c1064_711)"><rect width="100" height="100" fill="#e2e5de"/>
<g filter="url(#f1064_711)">
<rect x="-5" y="-5" width="110" height="30" fill="#e7e7dc"/>
<rect x="-5" y="30" width="30" height="24" fill="#8fa5b2"/><rect x="-5" y="54" width="30" height="36" fill="#eef1ef"/>
<rect x="72" y="24" width="35" height="66" fill="#d6dfda"/><rect x="16" y="8" width="6" height="14" fill="#55594f"/>
<path d="M50 11 C32 11 28 26 28 42 C28 60 25 72 22 84 L79 84 C75 72 72 60 72 42 C72 26 68 11 50 11Z" fill="#7f5f47"/>
<ellipse cx="50" cy="44" rx="14.5" ry="20" fill="#dcae90"/>
<path d="M43 54 Q50 60 57 54" stroke="#f4e4dc" stroke-width="3.5" fill="none"/>
<path d="M41 62 L59 62 L62 100 L38 100Z" fill="#d9a688"/>
<path d="M-5 105 L4 82 Q20 74 38 72 L44 100 L56 100 L62 72 Q80 74 96 82 L105 105Z" fill="#171c2f"/>
<path d="M38 72 L45 100 L55 100 L62 72 L57 74 L50 92 L43 74Z" fill="#ece2d4"/>
</g></g></svg>
<div class="t" id="t58" style="left:1133.00px;top:711.38px;font-size:24px;letter-spacing:0.923px;color:#0a0a0a;font-weight:400;-webkit-text-stroke:0.45px #0a0a0a;">Sarah Mitchell</div>
<div class="t" id="t59" style="left:1133.00px;top:744.22px;font-size:21px;letter-spacing:0.333px;color:#686d7a;font-weight:400;-webkit-text-stroke:0.2px #686d7a;">24 Feb, 14:04</div>
<div class="t" id="t60" style="left:1063.00px;top:790.38px;font-size:24px;letter-spacing:0.812px;color:#0a0a0a;font-weight:400;-webkit-text-stroke:0.2px #0a0a0a;">Content draft for the launch email is ready for final review by 14:00.</div>
<div class="b" style="left:1064px;top:841.5px;width:1458px;height:1.5px;background:#e8eaed;"></div>
<svg class="i" style="left:2393.85px;top:871.35px;width:27.71px;height:27.71px;" viewBox="0 0 24 24" fill="none" stroke="#0a0a0a" stroke-width="2" stroke-linecap="round" stroke-linejoin="round"><path d="M7.9 20A9 9 0 1 0 4 16.1L2 22Z"/></svg>
<div class="t" id="t61" style="left:2445.00px;top:875.02px;font-size:21px;letter-spacing:0.250px;color:#0a0a0a;font-weight:400;-webkit-text-stroke:0.45px #0a0a0a;">Reply</div>
<div class="b" style="left:1044px;top:955.5px;width:1500px;height:248.5px;background:#fff;border:1.5px solid #eceef1;border-radius:20px;box-shadow:0 1px 3px rgba(0,0,0,0.05);"></div>
<svg class="i" style="left:1064.5px;top:982.0px;width:52px;height:52px" viewBox="0 0 100 100"><defs><clipPath id="c1064_982"><rect x="0" y="0" width="100" height="100" rx="50"/></clipPath><filter id="f1064_982" x="-10%" y="-10%" width="120%" height="120%"><feGaussianBlur stdDeviation="1.5"/></filter></defs>
<g clip-path="url(#c1064_982)"><rect width="100" height="100" fill="#e2e5de"/>
<g filter="url(#f1064_982)">
<rect x="-5" y="-5" width="110" height="30" fill="#e7e7dc"/>
<rect x="-5" y="30" width="30" height="24" fill="#8fa5b2"/><rect x="-5" y="54" width="30" height="36" fill="#eef1ef"/>
<rect x="72" y="24" width="35" height="66" fill="#d6dfda"/><rect x="16" y="8" width="6" height="14" fill="#55594f"/>
<path d="M50 11 C32 11 28 26 28 42 C28 60 25 72 22 84 L79 84 C75 72 72 60 72 42 C72 26 68 11 50 11Z" fill="#7f5f47"/>
<ellipse cx="50" cy="44" rx="14.5" ry="20" fill="#dcae90"/>
<path d="M43 54 Q50 60 57 54" stroke="#f4e4dc" stroke-width="3.5" fill="none"/>
<path d="M41 62 L59 62 L62 100 L38 100Z" fill="#d9a688"/>
<path d="M-5 105 L4 82 Q20 74 38 72 L44 100 L56 100 L62 72 Q80 74 96 82 L105 105Z" fill="#171c2f"/>
<path d="M38 72 L45 100 L55 100 L62 72 L57 74 L50 92 L43 74Z" fill="#ece2d4"/>
</g></g></svg>
<div class="t" id="t62" style="left:1133.00px;top:982.38px;font-size:24px;letter-spacing:0.923px;color:#0a0a0a;font-weight:400;-webkit-text-stroke:0.45px #0a0a0a;">Sarah Mitchell</div>
<div class="t" id="t63" style="left:1133.00px;top:1015.22px;font-size:21px;letter-spacing:0.333px;color:#686d7a;font-weight:400;-webkit-text-stroke:0.2px #686d7a;">24 Feb, 14:04</div>
<div class="t" id="t64" style="left:1063.00px;top:1061.38px;font-size:24px;letter-spacing:0.835px;color:#0a0a0a;font-weight:400;-webkit-text-stroke:0.2px #0a0a0a;">Support note: customers are asking for clearer permission settings in shared channels.</div>
<div class="b" style="left:1064px;top:1112.5px;width:1458px;height:1.5px;background:#e8eaed;"></div>
<svg class="i" style="left:2393.85px;top:1142.35px;width:27.71px;height:27.71px;" viewBox="0 0 24 24" fill="none" stroke="#0a0a0a" stroke-width="2" stroke-linecap="round" stroke-linejoin="round"><path d="M7.9 20A9 9 0 1 0 4 16.1L2 22Z"/></svg>
<div class="t" id="t65" style="left:2445.00px;top:1146.02px;font-size:21px;letter-spacing:0.250px;color:#0a0a0a;font-weight:400;-webkit-text-stroke:0.45px #0a0a0a;">Reply</div>
</div></div>
<div class="b" style="left:1008px;top:1234px;width:1571px;height:267px;background:#fafafb;border-bottom-right-radius:24px;"></div>
<div class="b" style="left:1008px;top:1234px;width:1571px;height:1.5px;background:#e9eaee;"></div>
<div class="b" style="left:1043px;top:1256px;width:1501px;height:223.5px;background:#fff;border:1.5px solid #eceef1;border-radius:20px;"></div>
<div class="b" style="left:1045px;top:1333.5px;width:1498px;height:1.5px;background:#eceef1;"></div>
<svg class="i" style="left:1070.78px;top:1281.89px;width:26.59px;height:26.59px;" viewBox="0 0 24 24" fill="none" stroke="#0a0a0a" stroke-width="2" stroke-linecap="round" stroke-linejoin="round"><line x1="21" x2="14" y1="4" y2="4"/><line x1="10" x2="3" y1="4" y2="4"/><line x1="21" x2="12" y1="12" y2="12"/><line x1="8" x2="3" y1="12" y2="12"/><line x1="21" x2="16" y1="20" y2="20"/><line x1="12" x2="3" y1="20" y2="20"/><line x1="14" x2="14" y1="2" y2="6"/><line x1="8" x2="8" y1="10" y2="14"/><line x1="16" x2="16" y1="18" y2="22"/></svg>
<div class="t" id="t66" style="left:1122.00px;top:1284.32px;font-size:21px;letter-spacing:0.889px;color:#0a0a0a;font-weight:400;-webkit-text-stroke:0.45px #0a0a0a;">Formatting</div>
<svg class="i" style="left:1252.65px;top:1279.24px;width:30.47px;height:30.47px;" viewBox="0 0 24 24" fill="none" stroke="#0a0a0a" stroke-width="2" stroke-linecap="round" stroke-linejoin="round"><path d="m6 9 6 6 6-6"/></svg>
<div class="b" style="left:2179px;top:1268px;width:53px;height:54px;background:#fff;border:1.5px solid #eceef1;border-radius:12px;box-shadow:0 1px 2px rgba(0,0,0,0.05);"></div>
<div class="b" style="left:2247px;top:1268px;width:54px;height:54px;background:#fff;border:1.5px solid #eceef1;border-radius:12px;box-shadow:0 1px 2px rgba(0,0,0,0.05);"></div>
<div class="b" style="left:2317px;top:1268px;width:53px;height:54px;background:#fff;border:1.5px solid #eceef1;border-radius:12px;box-shadow:0 1px 2px rgba(0,0,0,0.05);"></div>
<div class="b" style="left:2385px;top:1267px;width:144px;height:56px;background:#1c1d21;border-radius:14px;box-shadow:0 1px 3px rgba(0,0,0,0.15);"></div>
<svg class="i" style="left:2190.26px;top:1280.82px;width:28.43px;height:28.43px;" viewBox="0 0 24 24" fill="none" stroke="#0a0a0a" stroke-width="2" stroke-linecap="round" stroke-linejoin="round"><path d="M12 19v3"/><path d="M19 10v2a7 7 0 0 1-14 0v-2"/><rect x="9" y="2" width="6" height="13" rx="3"/></svg>
<svg class="i" style="left:2260.77px;top:1279.83px;width:29.61px;height:29.61px;" viewBox="0 0 24 24" fill="none" stroke="#0a0a0a" stroke-width="2" stroke-linecap="round" stroke-linejoin="round"><path d="m16 13 5.223 3.482a.5.5 0 0 0 .777-.416V7.87a.5.5 0 0 0-.752-.432L16 10.5"/><rect x="2" y="6" width="14" height="12" rx="2"/></svg>
<svg class="i" style="left:2328.60px;top:1280.80px;width:28.82px;height:28.82px;" viewBox="0 0 24 24" fill="none" stroke="#0a0a0a" stroke-width="2" stroke-linecap="round" stroke-linejoin="round"><path d="m16 6-8.414 8.586a2 2 0 0 0 2.829 2.829l8.414-8.586a4 4 0 1 0-5.657-5.657l-8.379 8.551a6 6 0 1 0 8.485 8.485l8.379-8.551"/></svg>
<svg class="i" style="left:2405.84px;top:1280.84px;width:27.82px;height:27.82px;" viewBox="0 0 24 24" fill="none" stroke="#fff" stroke-width="2" stroke-linecap="round" stroke-linejoin="round"><path d="M14.536 21.686a.5.5 0 0 0 .937-.024l6.5-19a.496.496 0 0 0-.635-.635l-19 6.5a.5.5 0 0 0-.024.937l7.93 3.18a2 2 0 0 1 1.112 1.11z"/><path d="m21.854 2.147-10.94 10.939"/></svg>
<div class="t" id="t67" style="left:2457.00px;top:1284.42px;font-size:21px;letter-spacing:0.667px;color:#fff;font-weight:400;-webkit-text-stroke:0.45px #fff;">Send</div>
<div class="b" style="left:1063px;top:1350px;width:2px;height:30px;background:#111;"></div>
<div class="t" id="t68" style="left:1067.00px;top:1353.48px;font-size:24px;letter-spacing:0.500px;color:#737a87;font-weight:400;-webkit-text-stroke:0.2px #737a87;">Write a message</div>
</body></html>
